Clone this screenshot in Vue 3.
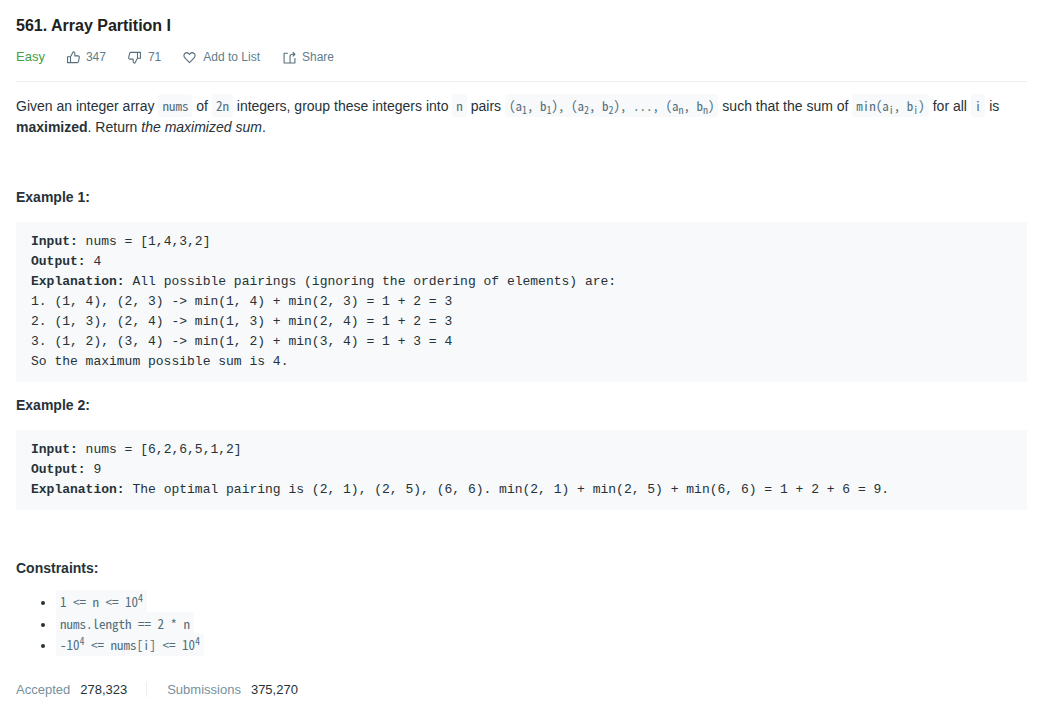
<template>
  <div class="question">
    <h4 class="title">561. Array Partition I</h4>
    <div class="meta">
      <span class="easy">Easy</span>
      <button class="action first">
        <svg viewBox="0 0 24 24"><path d="M1 21.500h5.500V10.500H1zM6.500 10.500 11.500 1.500c1.800 0 3 1.200 3 3v4.500h6c1.500 0 2.500 1.300 2.200 2.700l-1.500 7.300c-.3 1.300-1.300 2.500-2.700 2.500H6.500" /></svg>
        <span>347</span>
      </button>
      <button class="action nudge">
        <svg viewBox="0 0 24 24"><path d="M23 2.500h-5.500v11H23zM17.500 13.500 12.500 22.500c-1.800 0-3-1.200-3-3V15h-6c-1.500 0-2.500-1.300-2.200-2.700l1.500-7.300C3.100 3.700 4.100 2.500 5.500 2.500h12" /></svg>
        <span>71</span>
      </button>
      <button class="action nudge">
        <svg viewBox="0 0 24 24"><path d="M12 21.500 3.500 12.800C1 10.200 1.200 6.500 3.400 4.600c2.400-2 5.700-1.600 7.600.6l1 1.200 1-1.200c1.900-2.200 5.200-2.600 7.600-.6 2.200 1.900 2.400 5.600-.1 8.200z" /></svg>
        <span>Add to List</span>
      </button>
      <button class="action">
        <svg viewBox="0 0 24 24"><path d="M9 4H2v18h20V13M13 22V10c0-3 2-4 4-4h5M18 2l4 4-4 4" /></svg>
        <span>Share</span>
      </button>
    </div>

    <div class="content">
      <p class="intro">
        Given an integer array <code>nums</code> of <code>2n</code> integers, group these integers into <code>n</code> pairs <code>(a<sub>1</sub>, b<sub>1</sub>), (a<sub>2</sub>, b<sub>2</sub>), ..., (a<sub>n</sub>, b<sub>n</sub>)</code> such that the sum of <code>min(a<sub>i</sub>, b<sub>i</sub>)</code> for all <code>i</code> is <strong>maximized</strong>. Return <em>the maximized sum</em>.
      </p>

      <p class="example-title first-example"><strong>Example 1:</strong></p>
      <pre><strong>Input:</strong> nums = [1,4,3,2]
<strong>Output:</strong> 4
<strong>Explanation:</strong> All possible pairings (ignoring the ordering of elements) are:
1. (1, 4), (2, 3) -&gt; min(1, 4) + min(2, 3) = 1 + 2 = 3
2. (1, 3), (2, 4) -&gt; min(1, 3) + min(2, 4) = 1 + 2 = 3
3. (1, 2), (3, 4) -&gt; min(1, 2) + min(3, 4) = 1 + 3 = 4
So the maximum possible sum is 4.</pre>

      <p class="example-title"><strong>Example 2:</strong></p>
      <pre><strong>Input:</strong> nums = [6,2,6,5,1,2]
<strong>Output:</strong> 9
<strong>Explanation:</strong> The optimal pairing is (2, 1), (2, 5), (6, 6). min(2, 1) + min(2, 5) + min(6, 6) = 1 + 2 + 6 = 9.</pre>

      <p class="constraints-title"><strong>Constraints:</strong></p>
      <ul>
        <li><code>1 &lt;= n &lt;= 10<sup>4</sup></code></li>
        <li><code>nums.length == 2 * n</code></li>
        <li><code>-10<sup>4</sup> &lt;= nums[i] &lt;= 10<sup>4</sup></code></li>
      </ul>
    </div>

    <div class="stats">
      <div class="stat">
        <span class="label">Accepted</span>
        <span class="value">278,323</span>
      </div>
      <div class="stat">
        <span class="label">Submissions</span>
        <span class="value">375,270</span>
      </div>
    </div>
  </div>
</template>
<script setup>
</script>
<style scoped>
.question {
  padding: 0 13px 0 16px;
  font-family: "Liberation Sans", Arial, sans-serif;
  font-size: 14px;
  color: #263238;
}

.title {
  margin: 0;
  padding-top: 17px;
  font-size: 16px;
  line-height: 18px;
  font-weight: 700;
  color: #212121;
}

.meta {
  display: flex;
  align-items: center;
  height: 20px;
  margin-top: 12px;
  padding-bottom: 14px;
  border-bottom: 1px solid #eceff1;
  font-size: 12px;
}

.easy {
  position: relative;
  top: -1px;
  font-size: 13px;
  color: #43a047;
}

.action {
  display: flex;
  align-items: center;
  gap: 6px;
  margin-left: 23px;
  padding: 0;
  border: 0;
  background: none;
  font: inherit;
  color: #607d8b;
}

.action.first {
  margin-left: 22px;
}

.action.nudge {
  gap: 7px;
  margin-left: 22px;
}

.action svg {
  width: 13px;
  height: 13px;
  fill: none;
  stroke: #546e7a;
  stroke-width: 2;
  stroke-linejoin: round;
}

.content {
  padding-top: 13px;
}

p {
  margin: 0;
}

.intro {
  line-height: 21px;
}

code {
  padding: 2px 4px;
  border-radius: 3px;
  background: #f7f9fa;
  font-family: "Noto Sans Mono CJK SC", "Liberation Mono", monospace;
  font-size: 13px;
  color: #546e7a;
}

sub,
sup {
  position: relative;
  vertical-align: baseline;
  font-size: 10px;
  line-height: 0;
}

sub {
  bottom: -0.25em;
}

sup {
  top: -0.5em;
}

.example-title {
  line-height: 20px;
}

.first-example {
  margin-top: 49px;
}

pre {
  margin: 15px 0 13px;
  padding: 10px 15px;
  background: #f7f9fa;
  font-family: "Liberation Mono", monospace;
  font-size: 13px;
  line-height: 20px;
  color: #263238;
}

.constraints-title {
  margin-top: 48px;
  line-height: 20px;
}

ul {
  margin: 13px 0 0;
  padding-left: 40px;
  line-height: 21px;
}

li {
  height: 21.5px;
}

.stats {
  display: flex;
  margin-top: 26px;
  font-size: 13px;
}

.stat {
  display: flex;
  gap: 10px;
}

.stat + .stat {
  margin-left: 19px;
  padding-left: 20px;
  border-left: 1px solid #eceff1;
}

.label {
  color: #78909c;
}

.value {
  color: #263238;
}
</style>
